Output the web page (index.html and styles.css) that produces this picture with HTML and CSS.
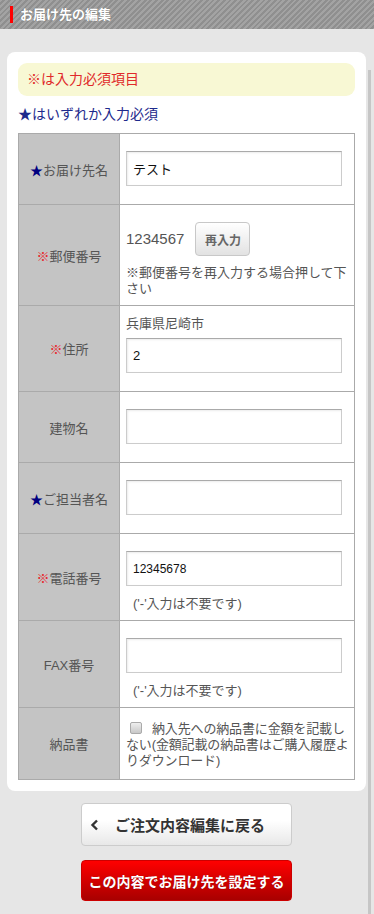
FILE: index.html
```html
<!DOCTYPE html>
<html lang="ja">
<head>
  <meta charset="UTF-8" />
  <meta name="viewport" content="width=device-width, initial-scale=1.0" />
  <title>お届け先の編集</title>
  <link rel="stylesheet" href="styles.css">
</head>
<body>
  <header class="page-head">
    <h1>お届け先の編集</h1>
  </header>
  <div class="scroll-track"></div>
  <main class="main">
    <div class="card">
      <div class="notice">※は入力必須項目</div>
      <p class="hint">★はいずれか入力必須</p>
      <table class="form-table">
        <tr>
          <th><span class="star">★</span>お届け先名</th>
          <td><input type="text" class="field" value="テスト"></td>
        </tr>
        <tr>
          <th><span class="req">※</span>郵便番号</th>
          <td>
            <div class="zip-line">
              <span class="zip">1234567</span>
              <button class="btn-small">再入力</button>
            </div>
            <div class="note note-zip">※郵便番号を再入力する場合押して下さい</div>
          </td>
        </tr>
        <tr>
          <th><span class="req">※</span>住所</th>
          <td>
            <div class="pref">兵庫県尼崎市</div>
            <input type="text" class="field field-addr" value="2">
          </td>
        </tr>
        <tr>
          <th>建物名</th>
          <td><input type="text" class="field" value=""></td>
        </tr>
        <tr>
          <th><span class="star">★</span>ご担当者名</th>
          <td><input type="text" class="field" value=""></td>
        </tr>
        <tr>
          <th><span class="req">※</span>電話番号</th>
          <td>
            <input type="text" class="field field-num" value="12345678">
            <div class="note note-tel">('-'入力は不要です)</div>
          </td>
        </tr>
        <tr>
          <th>FAX番号</th>
          <td>
            <input type="text" class="field field-num" value="">
            <div class="note note-tel">('-'入力は不要です)</div>
          </td>
        </tr>
        <tr>
          <th>納品書</th>
          <td>
            <div class="note note-check"><span class="check"></span>納入先への納品書に金額を記載しない(金額記載の納品書はご購入履歴よりダウンロード)</div>
          </td>
        </tr>
      </table>
    </div>
    <div class="actions">
      <button class="btn btn-back">
        <svg class="chev" width="9" height="12" viewBox="0 0 9 12"><polyline points="7,1.5 2.5,6 7,10.5" fill="none" stroke="#333" stroke-width="2.4"/></svg>
        ご注文内容編集に戻る
      </button>
      <button class="btn btn-submit">この内容でお届け先を設定する</button>
    </div>
  </main>
</body>
</html>
```

FILE: styles.css
```css
body { margin: 0; background: #e6e6e6; font-family: "Liberation Sans", "Noto Sans CJK JP", sans-serif; color: #555; }
.page-head { height: 29px; background: repeating-linear-gradient(135deg, #a3a3a3 0 2px, #8f8f8f 2px 4px); display: flex; align-items: center; padding-left: 10px; }
.page-head h1 { margin: 0; border-left: 3px solid #f00; padding-left: 7px; font-size: 13px; line-height: 17px; color: #fff; font-weight: bold; text-shadow: 0 0 1px rgba(0,0,0,0.3); }
.scroll-track { position: absolute; left: 368px; top: 70px; bottom: 0; width: 3px; background: #c6c6c6; }
.main { padding: 23px 8px 20px 7px; }
.card { background: #fff; border-radius: 8px; padding: 11px; }
.notice { background: #f8f8d4; border-radius: 9px; height: 33px; line-height: 33px; padding-left: 9px; font-size: 14px; color: #e02a2a; }
.hint { margin: 9px 0 9px; font-size: 14px; line-height: 19px; color: #1e2a8c; }
.form-table { width: 100%; border-collapse: collapse; }
.form-table th, .form-table td { border: 1px solid #aaa; }
.form-table th { width: 100px; background: #c4c4c4; font-weight: normal; font-size: 13px; color: #555; text-align: center; padding: 0; }
.form-table td { padding: 8px 3px 8px 6px; font-size: 13px; line-height: 16px; vertical-align: top; }
.star { color: #000080; }
.req { color: #e8282e; }
.field { display: block; box-sizing: border-box; width: 216px; height: 35px; margin: 9px 0 10px; border: 1px solid #ccc; border-top-color: #aaa; box-shadow: inset 1px 1px 2px rgba(0,0,0,0.08); padding: 0 6px; font-family: inherit; font-size: 13px; color: #111; }
.field-addr { margin-top: 5px; }
.field-num { font-size: 12px; }
.zip-line { display: flex; align-items: center; margin-top: 9px; }
.zip { font-size: 15px; color: #555; margin-right: 11px; }
.btn-small { width: 55px; height: 34px; border: 1px solid #c8c8c8; border-radius: 4px; background: linear-gradient(#fff, #e2e2e2); font-family: inherit; font-size: 12px; font-weight: bold; color: #666; padding: 0; }
.note { color: #555; }
.note-zip { margin-top: 9px; }
.pref { line-height: 18px; margin-top: 1px; }
.note-tel { margin-top: 9px; padding-left: 7px; }
.note-check { margin: 5px 0 2px; letter-spacing: -0.15px; }
.check { display: inline-block; box-sizing: border-box; width: 12px; height: 12px; margin: 0 10px 0 4px; vertical-align: -1px; border: 1px solid #aaa; border-radius: 2px; background: linear-gradient(#eee, #c8c8c8); }
.actions { display: flex; flex-direction: column; align-items: center; padding-top: 12px; }
.btn { width: 211px; border-radius: 4px; font-family: inherit; font-weight: bold; padding: 0; }
.btn-back { height: 43px; border: 1px solid #ccc; background: linear-gradient(#fff 40%, #e8e8e8); color: #333; font-size: 15px; display: flex; align-items: center; }
.chev { margin: 0 16px 0 8px; }
.btn-submit { height: 41px; margin-top: 14px; border: 1px solid #c00; background: linear-gradient(#f00, #a80000); color: #fff; font-size: 14px; text-shadow: 0 0 1px rgba(0,0,0,0.3); }
```
